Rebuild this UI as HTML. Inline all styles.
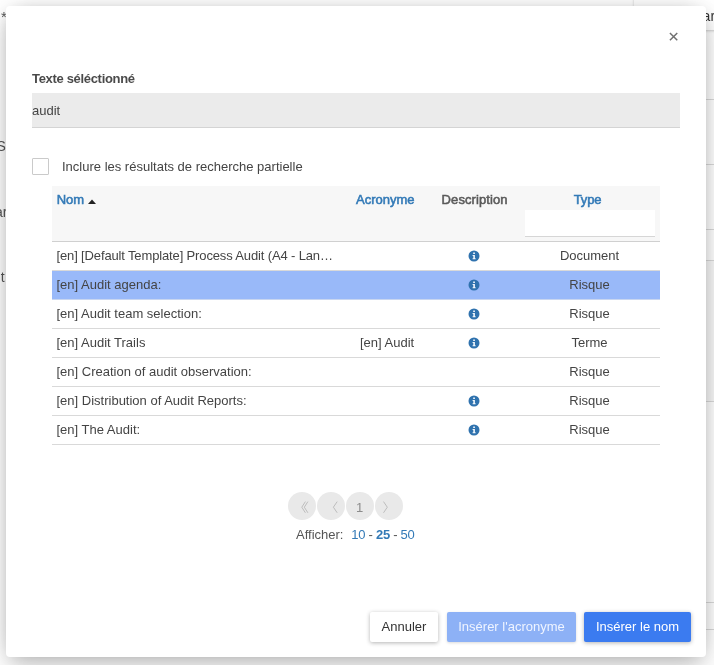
<!DOCTYPE html>
<html lang="fr">
<head>
<meta charset="utf-8">
<title>Texte séléctionné</title>
<style>
*{box-sizing:border-box;margin:0;padding:0}
html,body{width:714px;height:665px;overflow:hidden}
body{position:relative;background:#fefefe;font-family:"Liberation Sans",sans-serif;font-size:13px;color:#444}
.abs{position:absolute;white-space:nowrap}
/* page behind */
.bgtxt{color:#555;font-size:14px;line-height:16px}
.bg-card{left:634px;top:-4px;width:90px;height:34px;background:#fff;border-radius:0 0 0 3px;box-shadow:0 1px 3px rgba(0,0,0,.22)}
.bg-dark{left:700px;top:261px;width:14px;height:140px;background:#f7f7f7}
.hl{left:700px;width:14px;height:1px;background:#d9d9d9}
/* dialog */
.dialog{left:6px;top:6px;width:700px;height:651px;background:#fff;border-radius:4px;box-shadow:0 11.6px 23px -2.4px rgba(0,0,0,.19),0 0 22px -7.6px rgba(0,0,0,.35)}
.close{left:669.1px;top:32px;width:9.2px;height:9.2px}
.lbl{left:32px;top:71px;font-weight:bold;font-size:13px;line-height:16px;color:#4a4a4a;letter-spacing:-0.32px}
.input{left:32px;top:93px;width:648px;height:35px;background:#ebebeb;border-bottom:1px solid #d4d4d4;line-height:35px;font-size:13px;color:#444}
.cb{left:32px;top:158px;width:17px;height:17px;border:1px solid #cacaca;border-radius:1px;background:#fff}
.cbl{left:62px;top:158px;line-height:17px;font-size:13px;color:#444}
/* table */
.thead{left:52px;top:186px;width:608px;height:56px;background:#f7f7f7;border-bottom:1px solid #d0d0d0}
.th{top:191px;line-height:17px;font-weight:normal;-webkit-text-stroke:0.55px #337ab7;font-size:13px;color:#337ab7}
.th.dk{color:#5a5a5a;-webkit-text-stroke-color:#5a5a5a}
.filter{left:525px;top:210px;width:130px;height:27px;background:#fff;border-bottom:1px solid #d6d6d6}
.row{left:52px;width:608px;height:29px;border-bottom:1px solid #d9d9d9}
.row.sel{background:#99b9f9;border-bottom-color:#c9d6f0}
.c{top:0;line-height:28px;font-size:13px;color:#444}
.c.n{left:4.5px}
.c.a{left:308px}
.c.t{left:472.5px;width:130px;text-align:center}
.i{left:416.15px;top:7.7px;width:12px;height:12px}
/* pager */
.pg{top:491.6px;width:28px;height:28px;border-radius:50%;background:#e9e9e9;color:#8c8c8c;text-align:center;line-height:28px;font-size:13px}
.pg svg{position:absolute;left:0;top:0;width:28px;height:28px}
.aff{left:296px;top:527px;line-height:16px;font-size:13px;color:#555}
.aff b,.aff span span{color:#337ab7}
.aff i{font-size:2px}
/* buttons */
.btn{top:612px;height:30px;line-height:30px;text-align:center;font-size:13px;border-radius:2px;box-shadow:0 1px 4px rgba(0,0,0,.3)}
.b1{left:370px;width:68px;background:#fff;color:#333}
.b2{left:447px;width:129px;background:#8db1f6;color:#eff4ff;box-shadow:0 1px 3px rgba(0,0,0,.15)}
.b3{left:584px;width:107px;background:#3b7bf0;color:#fff}
</style>
</head>
<body>
<div id="root" style="position:absolute;left:0;top:0;width:714px;height:665px;will-change:transform">
<!-- background page fragments -->
<div class="abs bgtxt" style="left:1px;top:9px;font-size:15px">*</div>
<div class="abs bgtxt" style="left:-3.5px;top:137.5px">S</div>
<div class="abs bgtxt" style="left:-5px;top:203.5px">ar</div>
<div class="abs bgtxt" style="left:0.8px;top:268.5px">t</div>
<div class="abs bg-dark"></div>
<div class="abs bg-card"></div>
<div class="abs bgtxt" style="left:702.6px;top:7.5px;font-size:14px;color:#333">ar</div>
<div class="abs hl" style="top:99px"></div>
<div class="abs hl" style="top:164px"></div>
<div class="abs hl" style="top:229px"></div>
<div class="abs hl" style="top:260px"></div>
<div class="abs hl" style="top:401px"></div>
<div class="abs hl" style="top:602px"></div>
<div class="abs hl" style="top:629px"></div>

<div class="abs dialog"></div>

<svg class="abs close" viewBox="0 0 10 10"><path d="M1 1 L9 9 M9 1 L1 9" stroke="#707070" stroke-width="1.6" fill="none"/></svg>

<div class="abs lbl">Texte séléctionné</div>
<div class="abs input">audit</div>

<div class="abs cb"></div>
<div class="abs cbl">Inclure les résultats de recherche partielle</div>

<div class="abs thead"></div>
<div class="abs th" style="left:56.7px;letter-spacing:0px">Nom</div>
<svg class="abs" style="left:88px;top:199px;width:8px;height:5px" viewBox="0 0 8 5"><path d="M0 5 L4 0.4 L8 5 Z" fill="#222"/></svg>
<div class="abs th" style="left:356px;letter-spacing:0px">Acronyme</div>
<div class="abs th dk" style="left:441.6px;letter-spacing:0.09px">Description</div>
<div class="abs th" style="left:573.8px;letter-spacing:-0.15px">Type</div>
<div class="abs filter"></div>

<div class="abs row" style="top:242px"><div class="abs c n" style="letter-spacing:-0.14px">[en] [Default Template] Process Audit (A4 - Lan…</div><svg class="abs i" viewBox="0 0 12 12"><circle cx="6" cy="6" r="5.5" fill="#2f72ae"/><path d="M5.2 2.5h1.7v1.6H5.2z M4.6 5h2.3v3.3h.7v1H4.6v-1h.7V5.9h-.7z" fill="#f4f8fc"/></svg><div class="abs c t">Document</div></div>
<div class="abs row sel" style="top:271px"><div class="abs c n">[en] Audit agenda:</div><svg class="abs i" viewBox="0 0 12 12"><circle cx="6" cy="6" r="5.5" fill="#2f72ae"/><path d="M5.2 2.5h1.7v1.6H5.2z M4.6 5h2.3v3.3h.7v1H4.6v-1h.7V5.9h-.7z" fill="#f4f8fc"/></svg><div class="abs c t">Risque</div></div>
<div class="abs row" style="top:300px"><div class="abs c n">[en] Audit team selection:</div><svg class="abs i" viewBox="0 0 12 12"><circle cx="6" cy="6" r="5.5" fill="#2f72ae"/><path d="M5.2 2.5h1.7v1.6H5.2z M4.6 5h2.3v3.3h.7v1H4.6v-1h.7V5.9h-.7z" fill="#f4f8fc"/></svg><div class="abs c t">Risque</div></div>
<div class="abs row" style="top:329px"><div class="abs c n">[en] Audit Trails</div><div class="abs c a">[en] Audit</div><svg class="abs i" viewBox="0 0 12 12"><circle cx="6" cy="6" r="5.5" fill="#2f72ae"/><path d="M5.2 2.5h1.7v1.6H5.2z M4.6 5h2.3v3.3h.7v1H4.6v-1h.7V5.9h-.7z" fill="#f4f8fc"/></svg><div class="abs c t">Terme</div></div>
<div class="abs row" style="top:358px"><div class="abs c n">[en] Creation of audit observation:</div><div class="abs c t">Risque</div></div>
<div class="abs row" style="top:387px"><div class="abs c n">[en] Distribution of Audit Reports:</div><svg class="abs i" viewBox="0 0 12 12"><circle cx="6" cy="6" r="5.5" fill="#2f72ae"/><path d="M5.2 2.5h1.7v1.6H5.2z M4.6 5h2.3v3.3h.7v1H4.6v-1h.7V5.9h-.7z" fill="#f4f8fc"/></svg><div class="abs c t">Risque</div></div>
<div class="abs row" style="top:416px"><div class="abs c n">[en] The Audit:</div><svg class="abs i" viewBox="0 0 12 12"><circle cx="6" cy="6" r="5.5" fill="#2f72ae"/><path d="M5.2 2.5h1.7v1.6H5.2z M4.6 5h2.3v3.3h.7v1H4.6v-1h.7V5.9h-.7z" fill="#f4f8fc"/></svg><div class="abs c t">Risque</div></div>

<div class="abs pg" style="left:287.8px"><svg viewBox="0 0 28 28"><path d="M17.4 9.6 L13.8 15.2 L17.4 20.8 M19.9 9.6 L16.3 15.2 L19.9 20.8" stroke="#b8b8b8" stroke-width="0.9" fill="none"/></svg></div>
<div class="abs pg" style="left:316.8px"><svg viewBox="0 0 28 28"><path d="M20.2 9.6 L16.4 15.2 L20.2 20.8" stroke="#b8b8b8" stroke-width="0.9" fill="none"/></svg></div>
<div class="abs pg" style="left:345.8px"><span style="position:relative;left:-0.3px;top:2.2px">1</span></div>
<div class="abs pg" style="left:374.8px"><svg viewBox="0 0 28 28"><path d="M8.5 9.6 L12.3 15.2 L8.5 20.8" stroke="#b8b8b8" stroke-width="0.9" fill="none"/></svg></div>
<div class="abs aff">Afficher:&nbsp; <i>&nbsp;</i><span style="letter-spacing:-0.27px"><span>10</span> - <b>25</b> - <span>50</span></span></div>

<div class="abs btn b1">Annuler</div>
<div class="abs btn b2">Insérer l'acronyme</div>
<div class="abs btn b3">Insérer le nom</div>
</div>
</body>
</html>
